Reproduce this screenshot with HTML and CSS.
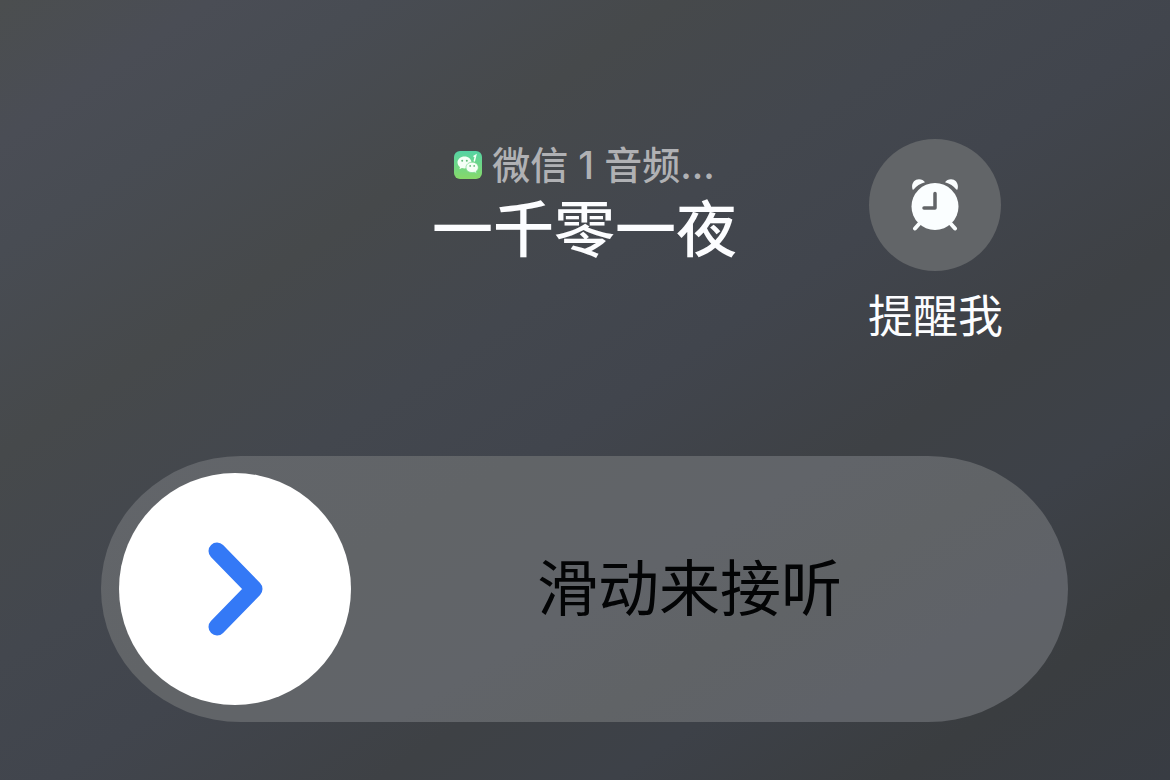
FILE: index.html
```
<!DOCTYPE html>
<html lang="zh-CN">
<head>
    <meta charset="UTF-8">
    <meta name="viewport" content="width=device-width, initial-scale=1.0">
    <title>来电</title>
    <link rel="stylesheet" href="styles.css">
</head>
<body>
    <main class="call">
        <header class="top">
            <div class="caller">
                <p class="source">
                    <svg class="app-icon" viewBox="0 0 28 28" aria-hidden="true">
                        <defs>
                            <linearGradient id="green" x1="0" y1="0" x2="0" y2="1">
                                <stop offset="0" stop-color="#55d3a4"/>
                                <stop offset="1" stop-color="#87d969"/>
                            </linearGradient>
                        </defs>
                        <rect width="28" height="28" rx="6" fill="url(#green)"/>
                        <path d="M10.500 5.500c-4 0-7 2.700-7 6 0 1.900 1 3.500 2.500 4.600l-.6 2.200 2.500-1.300c.8.300 1.700.4 2.600.4 4 0 7-2.600 7-5.900s-3-6-7-6z" fill="#f5fff6"/>
                        <path d="M18.200 11.200c-3.500 0-6.200 2.300-6.200 5.200s2.700 5.200 6.200 5.200c.8 0 1.500-.1 2.200-.3l2.100 1.200-.5-1.900c1.400-1 2.300-2.500 2.300-4.200 0-2.900-2.600-5.200-6.100-5.200z" fill="#f5fff6" stroke="#72d78a" stroke-width=".7"/>
                        <g fill="#63bd7b">
                            <circle cx="8.200" cy="9.700" r="1"/>
                            <circle cx="12.800" cy="9.700" r="1"/>
                            <circle cx="16.200" cy="14.900" r=".9"/>
                            <circle cx="20.200" cy="14.900" r=".9"/>
                        </g>
                        <path d="M19.500 5.700l2.200-1.400-1.500 6.200" fill="none" stroke="#f5fff6" stroke-width="1.500"/>
                    </svg>
                    <span>微信 1 音频...</span>
                </p>
                <h1 class="name">一千零一夜</h1>
            </div>
            <button type="button" class="remind">
                <span class="remind-circle">
                    <svg class="clock" viewBox="0 0 48 52" aria-hidden="true">
                        <g fill="#fafeff">
                            <path d="M1.600 10.500C-.2 5 3 .3 8 .2c2.700 0 4.600 1.200 6 3C9 4.400 5.500 7 2.900 10.300c-.3.500-1 .6-1.300.2z"/>
                            <path d="M46.400 10.500C48.200 5 45 .3 40 .2c-2.700 0-4.600 1.200-6 3 5 1.200 8.500 3.800 11.100 7.100.3.500 1 .6 1.300.2z"/>
                            <circle cx="24" cy="27.500" r="23.500"/>
                        </g>
                        <path d="M8 45l-4 4.500M40 45l4 4.500" stroke="#fafeff" stroke-width="4" stroke-linecap="round"/>
                        <path d="M24 14.500v14.500H13" fill="none" stroke="#626568" stroke-width="3.500" stroke-linecap="round" stroke-linejoin="round"/>
                    </svg>
                </span>
                <span class="remind-text">提醒我</span>
            </button>
        </header>

        <div class="slider">
            <input type="range" id="answer" class="slider-input" min="0" max="100" value="0">
            <label for="answer" class="slider-text">滑动来接听</label>
        </div>
    </main>

    <script>
        const answer = document.getElementById('answer');

        // 没有滑到底就回到起点
        answer.addEventListener('change', function () {
            if (answer.value < 100) {
                answer.value = 0;
            }
        });
    </script>
</body>
</html>
```
FILE: styles.css
```
* {
    box-sizing: border-box;
}

body {
    margin: 0;
    min-height: 100vh;
    background: linear-gradient(146deg, #4b4e4f 0%, #4a4d55 9%, #484c53 16%, #46494b 29%, #43474e 42%, #41454d 52%, #3e4145 66%, #3d4148 76%, #3a3d40 88%, #383c43 100%);
    font-family: Inter, "Noto Sans CJK SC", sans-serif;
    color: #fcfdff;
}

.call {
    padding: 139px 102px 58px 101px;
}

.top {
    display: grid;
    grid-template-columns: 1fr auto 1fr;
}

.caller {
    grid-column: 2;
    text-align: center;
}

.source {
    display: flex;
    align-items: center;
    justify-content: center;
    gap: 10px;
    margin: 0;
    font-size: 38px;
    font-weight: 500;
    line-height: 52px;
    color: #b0b1b4;
}

.app-icon {
    width: 28px;
    height: 28px;
}

.name {
    margin: 0;
    font-size: 61px;
    font-weight: 500;
    line-height: 78px;
}

.remind {
    display: flex;
    flex-direction: column;
    align-items: center;
    justify-self: end;
    gap: 16px;
    margin-right: 65px;
    padding: 0;
    border: none;
    background: none;
    color: #fcfdff;
    font-family: inherit;
    cursor: pointer;
}

.remind-circle {
    display: flex;
    align-items: center;
    justify-content: center;
    width: 132px;
    height: 132px;
    border-radius: 50%;
    background-color: #626568;
}

.clock {
    width: 48px;
    height: 52px;
}

.remind-text {
    font-size: 45px;
    line-height: 60px;
}

.slider {
    display: grid;
    align-items: center;
    height: 266px;
    margin-top: 109px;
    border-radius: 140px / 133px;
    background: linear-gradient(150deg, #62656a 0%, #616467 30%, #616469 52%, #606366 66%, #5f6268 82%, #5f6265 100%);
}

.slider-input,
.slider-text {
    grid-area: 1 / 1;
}

.slider-input {
    appearance: none;
    height: 232px;
    margin: 0 18px;
    background: none;
    cursor: pointer;
}

.slider-input::-webkit-slider-thumb {
    appearance: none;
    width: 232px;
    height: 232px;
    border: none;
    border-radius: 50%;
    background: #fff url("data:image/svg+xml,%3Csvg xmlns='http://www.w3.org/2000/svg' viewBox='0 0 232 232'%3E%3Cpath d='M98 78l37 38-37 38' fill='none' stroke='%233479f6' stroke-width='17' stroke-linecap='round' stroke-linejoin='round'/%3E%3C/svg%3E") center / 100% no-repeat;
}

.slider-text {
    padding-left: 210px;
    font-size: 61px;
    line-height: 80px;
    text-align: center;
    color: #030405;
    pointer-events: none;
}
```
